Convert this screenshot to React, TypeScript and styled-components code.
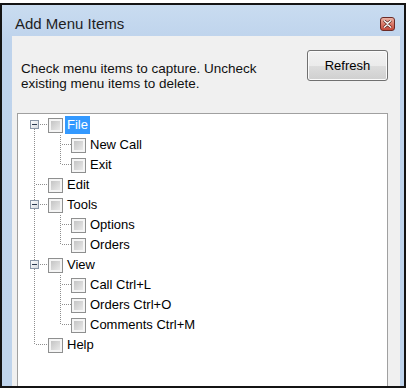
import React from 'react';
import styled, { createGlobalStyle } from 'styled-components';

const GlobalStyle = createGlobalStyle`
  html, body {
    margin: 0;
    padding: 0;
    background: #ffffff;
  }
  body {
    font-family: "Liberation Sans", Arial, sans-serif;
  }
`;

const Screen = styled.div`
  width: 406px;
  height: 388px;
  padding-top: 3px;
  box-sizing: border-box;
  overflow: hidden;
`;

const Window = styled.div`
  height: 385px;
  box-sizing: border-box;
  border: 2px solid #141414;
  display: flex;
  flex-direction: column;
  overflow: hidden;
  background: linear-gradient(to bottom, #c9dcf0 0px, #bed3ec 36px, #bfd4ec 100%);
`;

const TitleBar = styled.div`
  height: 31px;
  flex-shrink: 0;
  display: flex;
  align-items: flex-end;
  justify-content: space-between;
  padding: 0 9px 4px 13px;
  box-sizing: border-box;
`;

const Title = styled.span`
  font-size: 15px;
  line-height: 17px;
  color: #1e1e1e;
`;

const CloseButton = styled.div`
  width: 15px;
  height: 14px;
  margin-bottom: 1px;
  box-sizing: border-box;
  border: 1px solid #6b2a26;
  border-radius: 3px;
  background: linear-gradient(to bottom, #eab3a6 0%, #d8796a 50%, #c4493c 100%);
  display: flex;
  align-items: center;
  justify-content: center;
`;

const Client = styled.div`
  flex: 1;
  display: flex;
  flex-direction: column;
  margin: 0 4px 0 10px;
  padding: 14px 12px 0 5px;
  background: #f0f0f0;
`;

const Header = styled.div`
  display: flex;
  justify-content: space-between;
  align-items: flex-start;
  padding-left: 4px;
`;

const Hint = styled.p`
  margin: 11px 0 0 0;
  width: 255px;
  font-size: 13.5px;
  line-height: 15px;
  color: #111;
`;

const RefreshButton = styled.button`
  width: 81px;
  height: 31px;
  padding: 0;
  border: 1px solid #707070;
  border-radius: 3px;
  box-shadow: inset 0 0 0 1px #fbfbfb;
  background: linear-gradient(to bottom, #f2f2f2 0%, #ebebeb 50%, #dddddd 51%, #cfcfcf 100%);
  font-family: "Liberation Sans", Arial, sans-serif;
  font-size: 13px;
  color: #000;
`;

const TreeBox = styled.div`
  flex: 1;
  margin-top: 22px;
  padding: 1px 0 0 3px;
  background: #ffffff;
  border: 1px solid #a0a0a0;
  border-bottom: none;
`;

const Row = styled.div`
  display: flex;
  align-items: center;
  height: 20px;
`;

const CheckBox = styled.span`
  width: 15px;
  height: 15px;
  box-sizing: border-box;
  flex-shrink: 0;
  border: 1px solid #8e8f8f;
  padding: 2px;
  background: linear-gradient(135deg, #c4c4c4 0%, #e9e9e9 100%) content-box, #f5f5f5;
`;

const Label = styled.span<{ $selected?: boolean }>`
  margin-left: 2px;
  padding: 1px 2px;
  font-size: 13px;
  line-height: 16px;
  white-space: nowrap;
  color: ${(p) => (p.$selected ? '#ffffff' : '#000000')};
  background: ${(p) => (p.$selected ? '#3399ff' : 'transparent')};
`;

type Guide = 'pipe' | 'tee' | 'elbow' | 'first' | 'middle';

const dots = { stroke: '#8e8e8e', strokeDasharray: '1 1', shapeRendering: 'crispEdges' as const };

// one column of the tree connector lines
const GuideCell = ({ kind, width, line }: { kind: Guide; width: number; line: number }) => {
  const x = line + 0.5;
  const isBox = kind === 'first' || kind === 'middle';
  return (
    <svg width={width} height={20} style={{ flexShrink: 0, display: 'block' }}>
      <defs>
        <linearGradient id="exp" x1="0" y1="0" x2="1" y2="1">
          <stop offset="0" stopColor="#ffffff" />
          <stop offset="1" stopColor="#d4d8de" />
        </linearGradient>
      </defs>
      {kind === 'pipe' && <line x1={x} y1={0} x2={x} y2={20} {...dots} />}
      {kind === 'tee' && (
        <>
          <line x1={x} y1={0} x2={x} y2={20} {...dots} />
          <line x1={x + 1} y1={9.5} x2={width} y2={9.5} {...dots} />
        </>
      )}
      {kind === 'elbow' && (
        <>
          <line x1={x} y1={0} x2={x} y2={10} {...dots} />
          <line x1={x + 1} y1={9.5} x2={width} y2={9.5} {...dots} />
        </>
      )}
      {isBox && (
        <>
          {kind === 'middle' && <line x1={x} y1={0} x2={x} y2={5} {...dots} />}
          <line x1={x} y1={14} x2={x} y2={20} {...dots} />
          <line x1={x + 5} y1={9.5} x2={width} y2={9.5} {...dots} />
          <rect x={x - 4} y={5.5} width={8} height={8} fill="url(#exp)" stroke="#8a96a6" shapeRendering="crispEdges" />
          <rect x={x - 2.5} y={9} width={5} height={1} fill="#2b3a4e" />
        </>
      )}
    </svg>
  );
};

interface Item {
  text: string;
  selected?: boolean;
  children?: string[];
}

const items: Item[] = [
  { text: 'File', selected: true, children: ['New Call', 'Exit'] },
  { text: 'Edit' },
  { text: 'Tools', children: ['Options', 'Orders'] },
  { text: 'View', children: ['Call Ctrl+L', 'Orders Ctrl+O', 'Comments Ctrl+M'] },
  { text: 'Help' },
];

const App = () => {
  return (
    <>
      <GlobalStyle />
      <Screen>
        <Window>
          <TitleBar>
            <Title>Add Menu Items</Title>
            <CloseButton>
              <svg width="9" height="8" viewBox="0 0 9 8">
                <path d="M1 0.5 L4.5 3.5 L8 0.5 M1 7.5 L4.5 4.5 L8 7.5" stroke="#4a1a16" strokeWidth="2.6" fill="none" />
                <path d="M1 0.5 L4.5 3.5 L8 0.5 M1 7.5 L4.5 4.5 L8 7.5" stroke="#ffffff" strokeWidth="1.4" fill="none" />
              </svg>
            </CloseButton>
          </TitleBar>
          <Client>
            <Header>
              <Hint>
                Check menu items to capture. Uncheck existing menu items to delete.
              </Hint>
              <RefreshButton>Refresh</RefreshButton>
            </Header>
            <TreeBox>
              {items.map((item, i) => {
                const last = i === items.length - 1;
                let kind: Guide;
                if (item.children) kind = i === 0 ? 'first' : 'middle';
                else kind = last ? 'elbow' : 'tee';
                return (
                  <React.Fragment key={item.text}>
                    <Row>
                      <GuideCell kind={kind} width={27} line={13} />
                      <CheckBox />
                      <Label $selected={item.selected}>{item.text}</Label>
                    </Row>
                    {item.children?.map((child, j) => (
                      <Row key={child}>
                        <GuideCell kind="pipe" width={27} line={13} />
                        <GuideCell
                          kind={j === item.children!.length - 1 ? 'elbow' : 'tee'}
                          width={23}
                          line={12}
                        />
                        <CheckBox />
                        <Label>{child}</Label>
                      </Row>
                    ))}
                  </React.Fragment>
                );
              })}
            </TreeBox>
          </Client>
        </Window>
      </Screen>
    </>
  );
};

export default App;
